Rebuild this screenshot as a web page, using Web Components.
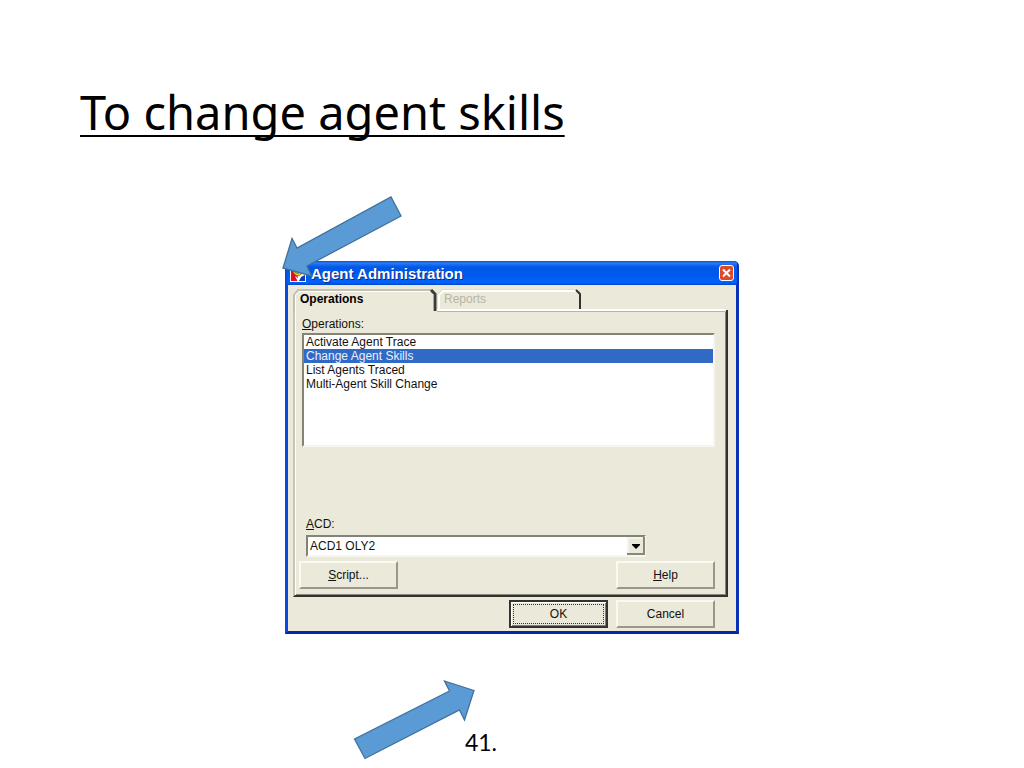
<!DOCTYPE html>
<html lang="en">
<head>
<meta charset="utf-8">
<title>To change agent skills</title>
<style>
html, body { margin: 0; background: #fff; }
body { font-family: "Noto Sans", sans-serif; color: #000; }
</style>
</head>
<body>
<slide-page>
  <span slot="title">To change agent skills</span>
  <admin-window heading="Agent Administration"></admin-window>
  <block-arrow slot="start" kind="down-left"></block-arrow>
  <block-arrow slot="end" kind="up-right"></block-arrow>
  <span slot="number">41.</span>
</slide-page>
<script>
function define(name, markup, setup) {
  const t = document.createElement('template');
  t.innerHTML = markup;
  customElements.define(name, class extends HTMLElement {
    constructor() {
      super();
      this.attachShadow({ mode: 'open' }).append(t.content.cloneNode(true));
    }
    connectedCallback() { if (setup) setup(this, this.shadowRoot); }
  });
}

define('slide-page', `
<style>
:host { display: flex; flex-direction: column; min-height: 100vh; box-sizing: border-box; overflow: hidden; }
h1 { margin: 0; padding: 80px 80px 0; font-size: 47px; line-height: 64px; font-weight: 400;
  text-decoration: underline; text-decoration-thickness: 2px; text-underline-offset: 5px; text-decoration-skip-ink: none; }
main { position: relative; align-self: center; width: 454px; max-width: 100%; margin-top: 117px; }
.start, .end { position: absolute; }
.start { left: -4px; top: -66px; }
.end { left: 68px; top: 418px; }
footer { margin-top: auto; padding: 0 62px 12px 0; text-align: center; font: 23px/28px Lato, sans-serif; }
</style>
<h1><slot name="title"></slot></h1>
<main><slot></slot>
  <div class="start"><slot name="start"></slot></div>
  <div class="end"><slot name="end"></slot></div>
</main>
<footer><slot name="number"></slot></footer>`);

define('block-arrow', `
<style>
:host { display: block; }
svg { display: block; }
path { fill: #5b9bd5; stroke: #41719c; stroke-width: 1.3; }
</style>
<svg width="124" height="84" aria-hidden="true"><path/></svg>`, (el, root) => {
  root.querySelector('path').setAttribute('d', el.getAttribute('kind') === 'down-left'
    ? 'M2 73 L11 43.5 L16 53 L110 2 L120 21 L26 71 L30.5 81 Z'
    : 'M121 11.5 L91.5 2 L96.5 12 L1.5 60 L12 79.5 L106.5 31 L111.5 41 Z');
});

define('push-button', `
<style>
:host { display: block; flex: none; width: 99px; }
button { display: block; width: 100%; height: 28px; padding: 0; background: #ebe9d9; color: #111;
  font: inherit; border: 2px solid; border-color: #fbfaf2 #9a978a #9a978a #fbfaf2; border-radius: 0; }
:host([default]) button { border-color: #333; box-shadow: inset 1px 1px #fff, inset -1px -1px #858274;
  outline: 1px dotted #333; outline-offset: -5px; }
</style>
<button type="button"><slot></slot></button>`);

define('tab-strip', `
<style>
:host { display: block; height: 23px; }
div { display: flex; }
button { position: relative; flex: none; width: 145px; height: 23px; padding: 0 0 4px 8px; border: 0; background: none;
  text-align: left; font: inherit; line-height: 18px; color: #b8b5a2; }
button[aria-selected=true] { font-weight: 700; color: #000; padding-left: 7px; width: 143px; }
svg { position: absolute; left: 0; top: 0; }
</style>
<div role="tablist">
<button type="button" role="tab" aria-selected="true"><svg width="145" height="24" fill="none" aria-hidden="true">
<path d="M1 24V6L5 1H138" stroke="#c0bfb8" stroke-width="2"/><path d="M2.5 24V6L6 2.5H138" stroke="#fff"/>
<path d="M138 1L142 5V22" stroke="#3c3b38" stroke-width="3"/><path d="M140.5 5V22" stroke="#aaa79a"/></svg>Operations</button>
<button type="button" role="tab" aria-selected="false" disabled><svg width="147" height="24" fill="none" aria-hidden="true">
<path d="M2 21V5L6 1H140" stroke="#d0cec4" stroke-width="1"/><path d="M3 21V6L7 2H140" stroke="#fff" stroke-width="2"/>
<path d="M140 1L144 5V20" stroke="#33322e" stroke-width="2"/></svg>Reports</button>
</div>`);

define('operation-list', `
<style>
:host { display: block; }
label { display: block; line-height: 17px; }
select { display: block; width: 100%; height: 114px; margin: 0; padding: 0; overflow: hidden; font: inherit; color: #111; background: #fff;
  border: 2px solid; border-color: #85827a #f6f5ee #f6f5ee #85827a; border-radius: 0; outline: 0; }
option { padding: 0 2px; min-height: 14px; line-height: 14px; height: 14px; }
option:checked { background: linear-gradient(#316ac5, #316ac5); -webkit-text-fill-color: #e8f0ff; }
</style>
<label for="ops"><u>O</u>perations:</label>
<select id="ops" size="8">
<option>Activate Agent Trace</option><option selected>Change Agent Skills</option>
<option>List Agents Traced</option><option>Multi-Agent Skill Change</option>
</select>`);

define('acd-picker', `
<style>
:host { display: block; width: 340px; max-width: 100%; }
label { display: block; line-height: 16px; margin-bottom: 3px; }
div { position: relative; }
select { appearance: none; display: block; width: 100%; height: 22px; margin: 0; padding: 0 20px 0 2px; font: inherit; color: #111;
  background: #fff; border: 2px solid; border-color: #85827a #f6f5ee #f6f5ee #85827a; border-radius: 0; }
svg { position: absolute; right: 1px; top: 2px; pointer-events: none; }
</style>
<label for="acd"><u>A</u>CD:</label>
<div><select id="acd"><option>ACD1 OLY2</option></select>
<svg width="18" height="18" aria-hidden="true"><path d="M0 0H18V18H0Z" fill="#ebe9d9"/><path d="M1 17V1H17" fill="none" stroke="#fff"/><path d="M0 17H17V0" fill="none" stroke="#8a877a" stroke-width="2"/><path d="M5 7H13V8L9 12L5 8Z" fill="#000"/></svg></div>`);

define('admin-window', `
<style>
:host { display: block; box-sizing: border-box; border: 3px solid; border-color: #0a4fd8 #0831b8 #0526a8 #0a48e0; border-top: 0;
  border-radius: 4px 5px 0 0; background: #ebe9d9; color: #111; font: 12px/14px "Liberation Sans", Arial, sans-serif; }
header { display: flex; align-items: center; gap: 4px; height: 24px; margin: 0 -1px; padding: 0 3px 0 2px; box-sizing: border-box;
  background: linear-gradient(#0a4ccc, #2b7cf5 8%, #0058e6 25%, #0058ee 60%, #0064fc 88%, #0048cc); color: #fff; border-radius: 3px 3px 0 0; }
h2 { flex: 1; margin: 0; padding-top: 1px; font-size: 15px; line-height: 20px; text-shadow: 1px 1px #0a2c80; }
header svg { display: block; }
.close { flex: none; width: 15px; height: 16px; padding: 0; border: 1px solid #fff; border-radius: 3px; background: #dc4a28; }
section { padding: 4px 8px 3px 5px; }
.panel { border: 2px solid; border-color: #c8c6ba #33322e #33322e #c8c6ba; border-top: 0; box-shadow: inset 1px 0 #fff, inset -1px -1px #8b887b;
  padding: 4px 11px 6px 7px; position: relative; }
.panel::before { content: ""; position: absolute; top: -3px; left: 142px; right: 0; height: 3px; background: #b5b3aa; border-top: 2px solid #fff; box-sizing: border-box; }
.panel::after { content: ""; position: absolute; top: -2px; right: -2px; width: 2px; height: 2px; background: #33322e; }
acd-picker { margin: 69px 0 0 4px; }
.row { display: flex; justify-content: space-between; margin: 4px 0 0 -3px; }
footer { display: flex; justify-content: flex-end; gap: 8px; padding: 4px 13px 0 0; margin-top: -1px; }
</style>
<header>
<svg width="18" height="18" viewBox="0 0 18 18" aria-hidden="true"><path d="M1 2H17V18H1Z" fill="#f4f4f8"/><path d="M2 7H5L9 13V17H2Z" fill="#dc1020"/><path d="M16 11L12 13L10 17H16Z" fill="#1838b0"/><path d="M13 4H16V10H13Z" fill="#90a8e0"/><circle cx="9" cy="7" r="4.500" fill="#e8dc38" stroke="#8a8420"/><path d="M6 8Q9 11 12 7" fill="none" stroke="#76731a"/><path d="M6 12L9 14L13 11L9 18Z" fill="#fff"/></svg>
<h2></h2>
<button class="close" type="button" aria-label="Close"><svg width="13" height="14" aria-hidden="true"><path d="M3 3.5L10 10.5M10 3.5L3 10.5" stroke="#fff" stroke-width="2"/></svg></button>
</header>
<section>
<tab-strip></tab-strip>
<div class="panel">
<operation-list></operation-list>
<acd-picker></acd-picker>
<div class="row"><push-button><u>S</u>cript...</push-button><push-button><u>H</u>elp</push-button></div>
</div>
<footer><push-button default>OK</push-button><push-button>Cancel</push-button></footer>
</section>`, (el, root) => { root.querySelector('h2').textContent = el.getAttribute('heading'); });
</script>
</body>
</html>
